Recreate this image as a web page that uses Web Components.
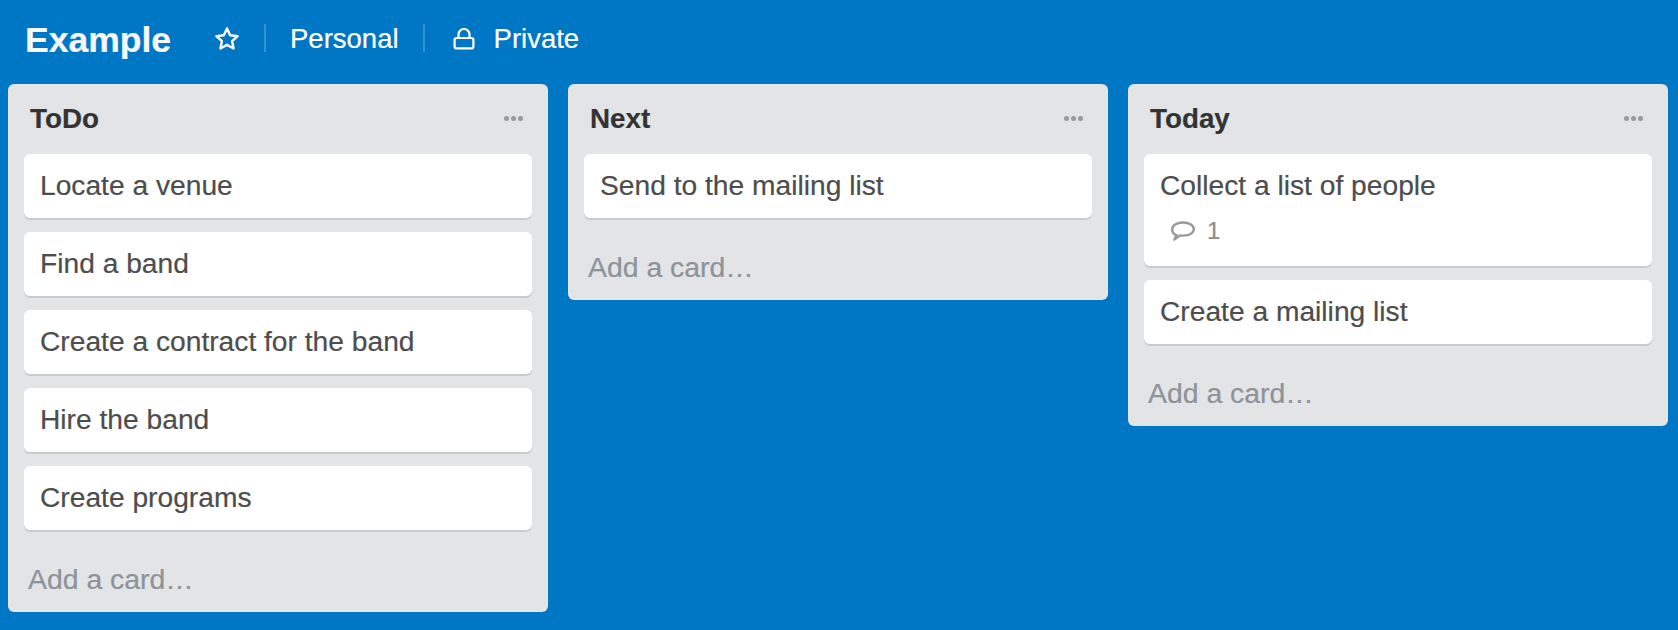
<!DOCTYPE html>
<html>
<head>
<meta charset="utf-8">
<title>Example</title>
<style>
  html, body {
    margin: 0;
    height: 630px;
    overflow: hidden;
    background: #0077c5;
    font-family: "Liberation Sans", Arial, sans-serif;
  }
</style>
</head>
<body>
<board-page>
  <board-header slot="header" name="Example" team="Personal" visibility="Private"></board-header>
  <board-list title="ToDo">
    <board-card>Locate a venue</board-card>
    <board-card>Find a band</board-card>
    <board-card>Create a contract for the band</board-card>
    <board-card>Hire the band</board-card>
    <board-card>Create programs</board-card>
  </board-list>
  <board-list title="Next">
    <board-card>Send to the mailing list</board-card>
  </board-list>
  <board-list title="Today">
    <board-card comments="1">Collect a list of people</board-card>
    <board-card>Create a mailing list</board-card>
  </board-list>
</board-page>

<script>
class BoardPage extends HTMLElement {
  constructor() {
    super();
    this.attachShadow({mode: "open"});
    this.shadowRoot.innerHTML = `
    <style>
      :host {
        display: block;
      }
      .lists {
        display: flex;
        align-items: flex-start;
        gap: 20px;
        padding: 0 10px 0 8px;
      }
    </style>
    <slot name="header"></slot>
    <div class="lists"><slot></slot></div>
    `;
  }
}

class BoardHeader extends HTMLElement {
  constructor() {
    super();
    this.attachShadow({mode: "open"});
    this.shadowRoot.innerHTML = `
    <style>
      :host {
        display: flex;
        align-items: center;
        height: 84px;
        padding: 0 0 6px 25px;
        color: #fff;
        font-size: 27.5px;
        box-sizing: border-box;
        -webkit-text-stroke: .2px #fff;
      }
      h1 {
        margin: 2px 43px 0 0;
        font-size: 35.5px;
        font-weight: bold;
        line-height: 40px;
        color: #f6f7f9;
      }
      .sep {
        width: 2px;
        height: 28px;
        margin-top: -2px;
        background: rgba(255,255,255,.2);
      }
      .star { margin-right: 24px; display: block; }
      .team { margin: 0 24.5px 0 24px; }
      .lock { margin: 0 18.5px 0 28px; display: block; }
    </style>
    <h1></h1>
    <svg class="star" width="26" height="26" viewBox="0 0 24 24" fill="none" stroke="#fff" stroke-width="2.2" stroke-linejoin="round">
      <path d="M12 2.2l2.9 6.3 6.9.8-5.1 4.7 1.4 6.8-6.1-3.4-6.1 3.4 1.4-6.8-5.1-4.7 6.9-.8z"/>
    </svg>
    <div class="sep"></div>
    <span class="team"></span>
    <div class="sep"></div>
    <svg class="lock" width="22" height="22" viewBox="0 0 22 22" fill="none" stroke="#fff" stroke-width="2.2" stroke-linejoin="round">
      <path d="M5.5 10V6.5a5.5 5.5 0 0 1 11 0V10"/>
      <rect x="1.6" y="10" width="18.8" height="10.4" rx="2"/>
    </svg>
    <span class="vis"></span>
    `;
  }

  connectedCallback() {
    this.shadowRoot.querySelector("h1").textContent = this.getAttribute("name");
    this.shadowRoot.querySelector(".team").textContent = this.getAttribute("team");
    this.shadowRoot.querySelector(".vis").textContent = this.getAttribute("visibility");
  }
}

class BoardList extends HTMLElement {
  constructor() {
    super();
    this.attachShadow({mode: "open"});
    this.shadowRoot.innerHTML = `
    <style>
      :host {
        display: block;
        flex: 0 0 540px;
        width: 540px;
        background: #e2e4e6;
        border-radius: 6px;
        box-sizing: border-box;
        padding: 0 16px;
      }
      .head {
        display: flex;
        align-items: center;
        justify-content: space-between;
        height: 70px;
        padding: 0 9px 0 6px;
        box-sizing: border-box;
      }
      h2 {
        margin: 0;
        font-size: 27.8px;
        line-height: 32px;
        font-weight: bold;
        color: #333;
        -webkit-text-stroke: .2px #333;
      }
      .dots {
        display: flex;
        gap: 2px;
        margin-top: -2px;
      }
      .dots i {
        width: 5px;
        height: 5px;
        border-radius: 50%;
        background: #999;
      }
      .cards {
        display: flex;
        flex-direction: column;
        gap: 14px;
      }
      .add {
        height: 82px;
        box-sizing: border-box;
        padding: 33px 0 0 4px;
        font-size: 28.4px;
        line-height: 32px;
        color: #8c939a;
        -webkit-text-stroke: .2px #8c939a;
      }
    </style>
    <div class="head">
      <h2></h2>
      <div class="dots"><i></i><i></i><i></i></div>
    </div>
    <div class="cards"><slot></slot></div>
    <div class="add">Add a card…</div>
    `;
  }

  connectedCallback() {
    this.shadowRoot.querySelector("h2").textContent = this.getAttribute("title");
  }
}

class BoardCard extends HTMLElement {
  constructor() {
    super();
    this.attachShadow({mode: "open"});
    this.shadowRoot.innerHTML = `
    <style>
      :host {
        display: block;
        background: #fff;
        border-radius: 6px;
        box-shadow: 0 2px 0 #c8cbce;
        padding: 15px 16px 17px;
        font-size: 28.2px;
        line-height: 32px;
        color: #4d4d4d;
        -webkit-text-stroke: .2px #4d4d4d;
      }
      .badges {
        display: flex;
        align-items: center;
        gap: 12px;
        height: 32px;
        margin: 14px 0 2px 11px;
        font-size: 24px;
        color: #8c8c8c;
        -webkit-text-stroke: .2px #8c8c8c;
      }
      .badges svg { display: block; }
      [hidden] { display: none; }
    </style>
    <slot></slot>
    <div class="badges" hidden>
      <svg width="24" height="20" viewBox="0 0 24 20" fill="none" stroke="#999" stroke-width="2.4" stroke-linejoin="round">
        <path d="M5.5 14.2C2.8 13.2 1.2 11.2 1.2 8.4c0-4 4.2-6.9 10.8-6.9s10.8 2.9 10.8 6.6c0 3.9-4.2 6.5-10.6 6.5-1.2 0-2.2 0-3.2-.2L3.4 18.6z"/>
      </svg>
      <span class="num"></span>
    </div>
    `;
  }

  connectedCallback() {
    if (this.hasAttribute("comments")) {
      this.shadowRoot.querySelector(".badges").hidden = false;
      this.shadowRoot.querySelector(".num").textContent = this.getAttribute("comments");
    }
  }
}

customElements.define("board-page", BoardPage);
customElements.define("board-header", BoardHeader);
customElements.define("board-list", BoardList);
customElements.define("board-card", BoardCard);
</script>
</body>
</html>
